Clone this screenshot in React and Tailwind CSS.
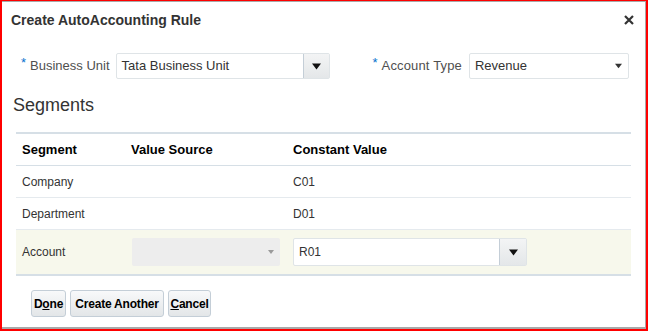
import React from "react";

const Caret = ({ className = "" }) => (
  <svg width="9" height="7" viewBox="0 0 9 7" className={className}>
    <path d="M0 0.5 L9 0.5 L4.5 6.5 Z" fill="currentColor" />
  </svg>
);

const Req = () => <span className="text-[#0572ce] text-[13px] mr-[4px] relative -top-[3px]">*</span>;

function Btn({ children, w }) {
  return (
    <button className={`${w} h-[27px] px-0 rounded-[3px] border border-[#c4ced7] bg-gradient-to-b from-[#f8f9fa] to-[#e3e6e8] text-[12px] font-bold text-[#000] leading-none tracking-[-0.2px] [font-family:'Liberation_Sans',Arial,sans-serif]`}>
      {children}
    </button>
  );
}

export default function App() {
  return (
    <div className="w-[648px] h-[331px] border-t border-l-2 border-r-2 border-b-2 border-[#ff0000] bg-white flex flex-col [font-family:'Liberation_Sans',Arial,sans-serif]">
      <div className="flex-1 flex flex-col border-t border-r border-b-2 border-[#a9a9a9]">
        {/* title */}
        <div className="h-[36px] flex items-center justify-between pl-[9px] pr-[11px]">
          <div className="text-[14px] font-bold text-[#333]">Create AutoAccounting Rule</div>
          <svg width="10" height="10" viewBox="0 0 10 10">
            <path d="M1 1 L9 9 M9 1 L1 9" stroke="#333" strokeWidth="2.2" />
          </svg>
        </div>

        {/* form row */}
        <div className="h-[28px] mt-[14px] flex items-center pl-[19px]">
          <Req />
          <span className="text-[13px] text-[#4f4f4f]">Business Unit</span>
          <div className="ml-[6px] w-[214px] h-[26px] flex border border-[#dfe4e7] rounded-[2px] bg-white">
            <div className="flex-1 flex items-center pl-[5px] text-[13px] text-[#333]">Tata Business Unit</div>
            <div className="w-[26px] flex items-center justify-center border-l border-[#c4ced7] bg-gradient-to-b from-[#f3f4f5] to-[#e4e7e9] text-[#111]">
              <Caret />
            </div>
          </div>
          <div className="ml-[43px] flex items-center">
            <Req />
            <span className="text-[13px] text-[#4f4f4f] tracking-[0.15px]">Account Type</span>
          </div>
          <div className="ml-[7px] w-[160px] h-[26px] flex items-center justify-between border border-[#dfe4e7] rounded-[2px] bg-white pl-[5px] pr-[6px]">
            <span className="text-[13px] text-[#333]">Revenue</span>
            <Caret className="text-[#333] w-[7px] h-[6px]" />
          </div>
        </div>

        {/* segments heading */}
        <div className="mt-[14px] pl-[11px] text-[18px] text-[#333] leading-[22px]">Segments</div>

        {/* table */}
        <div className="mx-[14px] mt-[16px] border-t-2 border-[#d6dfe6]">
          <div className="h-[32px] flex items-center border-b border-[#d6dfe6] text-[13px] font-bold text-[#000]">
            <div className="w-[109px] pl-[6px]">Segment</div>
            <div className="w-[162px] pl-[6px]">Value Source</div>
            <div className="flex-1 pl-[6px]">Constant Value</div>
          </div>
          <div className="h-[32px] flex items-center border-b border-[#e5eaee] text-[12px] text-[#333]">
            <div className="w-[109px] pl-[6px]">Company</div>
            <div className="w-[162px]"></div>
            <div className="flex-1 pl-[6px]">C01</div>
          </div>
          <div className="h-[32px] flex items-center border-b border-[#e5eaee] text-[12px] text-[#333]">
            <div className="w-[109px] pl-[6px]">Department</div>
            <div className="w-[162px]"></div>
            <div className="flex-1 pl-[6px]">D01</div>
          </div>
          <div className="h-[46px] flex items-center border-b-2 border-[#d6dfe6] bg-[#f7f8ec] text-[12px] text-[#333]">
            <div className="w-[109px] pl-[6px]">Account</div>
            <div className="w-[162px] pl-[7px]">
              <div className="w-[148px] h-[28px] rounded-[2px] bg-[#ededed] flex items-center justify-end pr-[6px] text-[#9a9a9a]">
                <Caret className="w-[6px] h-[6px]" />
              </div>
            </div>
            <div className="flex-1 pl-[6px]">
              <div className="w-[234px] h-[28px] flex border border-[#dfe4e7] rounded-[2px] bg-white">
                <div className="flex-1 flex items-center pl-[5px] text-[12px] text-[#333]">R01</div>
                <div className="w-[27px] flex items-center justify-center border-l border-[#c4ced7] bg-gradient-to-b from-[#f3f4f5] to-[#e4e7e9] text-[#111]">
                  <Caret />
                </div>
              </div>
            </div>
          </div>
        </div>

        {/* buttons */}
        <div className="mt-[14px] pl-[29px] flex gap-[4px]">
          <Btn w="w-[35px]">D<span className="underline">o</span>ne</Btn>
          <Btn w="w-[94px]">Create Another</Btn>
          <Btn w="w-[43px]"><span className="underline">C</span>ancel</Btn>
        </div>
      </div>
    </div>
  );
}
